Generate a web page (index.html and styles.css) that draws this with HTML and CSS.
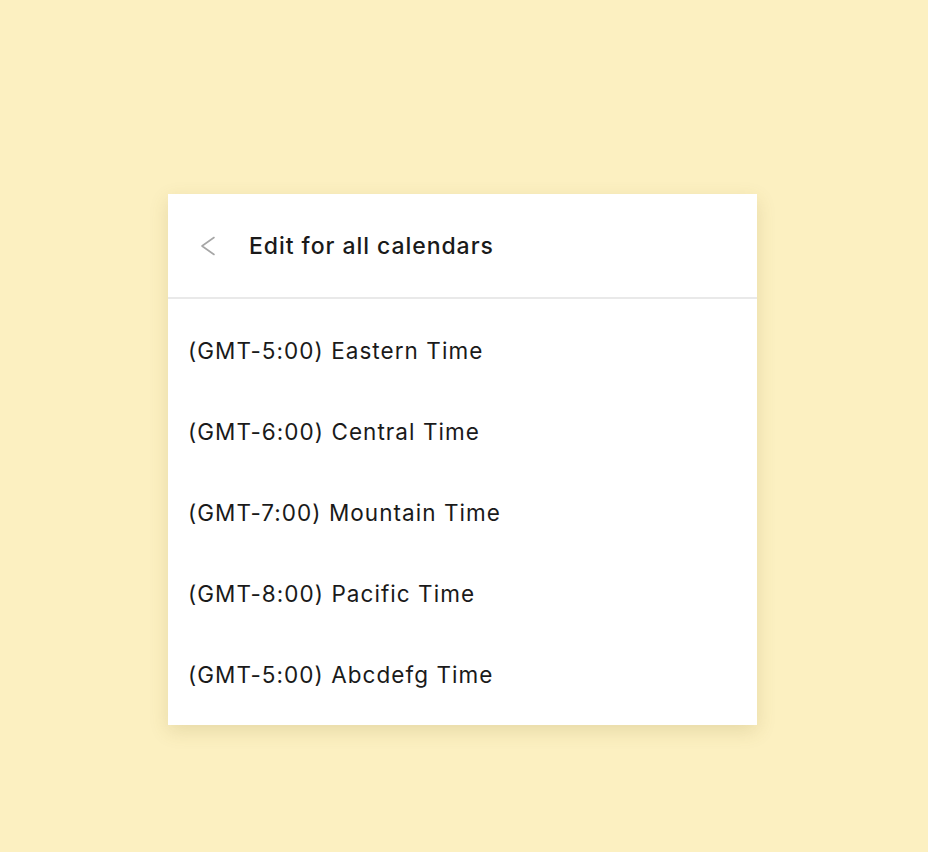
FILE: index.html
```html
<!DOCTYPE html>
<html lang="en">
<head>
<meta charset="utf-8">
<title>Edit for all calendars</title>
<link rel="stylesheet" href="styles.css">
</head>
<body>
<main class="stage">
  <section class="card">
    <header class="card-header">
      <button class="back" aria-label="Back">
        <svg width="16" height="20" viewBox="0 0 16 20" aria-hidden="true">
          <path d="M14 1.5 L2 10 L14 18.5" fill="none" stroke="#a6a6a6" stroke-width="1.6" stroke-linecap="round" stroke-linejoin="round"/>
        </svg>
      </button>
      <h1 class="title">Edit for all calendars</h1>
    </header>
    <ul class="zones">
      <li class="zone">(GMT-5:00) Eastern Time</li>
      <li class="zone">(GMT-6:00) Central Time</li>
      <li class="zone">(GMT-7:00) Mountain Time</li>
      <li class="zone">(GMT-8:00) Pacific Time</li>
      <li class="zone">(GMT-5:00) Abcdefg Time</li>
    </ul>
  </section>
</main>
</body>
</html>
```

FILE: styles.css
```css
html, body {
  margin: 0;
  padding: 0;
  background: #fcf0c1;
  font-family: Inter, "Noto Sans", "Liberation Sans", sans-serif;
  color: #1a1a1a;
}

.stage {
  min-height: 852px;
  padding: 194px 0 0 168px;
  box-sizing: border-box;
}

.card {
  width: 589px;
  height: 531px;
  background: #ffffff;
  box-shadow: 0 6px 18px rgba(120, 100, 30, 0.16);
  box-sizing: border-box;
}

.card-header {
  height: 105px;
  display: flex;
  align-items: center;
  padding: 0 0 0 32px;
  border-bottom: 2px solid #e9e9e9;
  box-sizing: border-box;
}

.back {
  width: 16px;
  height: 20px;
  padding: 0;
  margin: 0 33px 0 0;
  border: 0;
  background: none;
  display: flex;
}

.title {
  margin: 0;
  font-size: 23px;
  font-weight: 500;
  letter-spacing: 0.95px;
  color: #1a1a1a;
}

.zones {
  list-style: none;
  margin: 0;
  padding: 11px 0 0 0;
}

.zone {
  height: 81px;
  display: flex;
  align-items: center;
  padding-left: 20px;
  font-size: 22.5px;
  font-weight: 400;
  letter-spacing: 1.05px;
  color: #1a1a1a;
}
```
